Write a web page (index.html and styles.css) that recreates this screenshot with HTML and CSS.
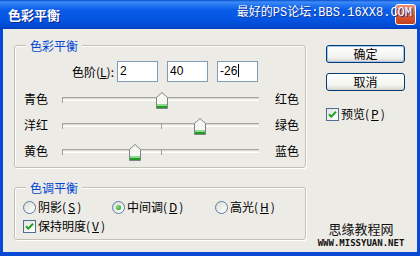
FILE: index.html
```html
<!DOCTYPE html>
<html>
<head>
  <meta charset="utf-8">
  <link rel="stylesheet" href="styles.css">
</head>
<body>
  <div class="window">
    <div class="titlebar">
      <span class="title">色彩平衡</span>
      <span class="forum">最好的PS论坛:BBS.16XX8.COM</span>
      <span class="close"></span>
    </div>

    <div class="body">
      <div class="main">
        <div class="group balance">
          <span class="legend">色彩平衡</span>
          <div class="levels">
            <span class="levels-label">色阶(<u>L</u>):</span>
            <div class="field">2</div>
            <div class="field">40</div>
            <div class="field">-26<span class="caret"></span></div>
          </div>

          <div class="sliders">
            <div class="slider-row">
              <span class="slider-name">青色</span>
              <div class="track">
                <i class="tick start"></i><i class="tick mid"></i>
                <svg class="thumb" style="left:51%" viewBox="0 0 12 17" width="12" height="17">
                  <path d="M0.5 5.5 L6 0.5 L11.5 5.5 V16.5 H0.5 Z" fill="#F6F7F2" stroke="#7E8384"/>
                  <rect x="1" y="12" width="10" height="2" fill="#8FD98F"/>
                  <rect x="1" y="14" width="10" height="2" fill="#249B24"/>
                </svg>
              </div>
              <span>红色</span>
            </div>
            <div class="slider-row">
              <span class="slider-name">洋红</span>
              <div class="track">
                <i class="tick start"></i><i class="tick mid"></i>
                <svg class="thumb" style="left:70%" viewBox="0 0 12 17" width="12" height="17">
                  <path d="M0.5 5.5 L6 0.5 L11.5 5.5 V16.5 H0.5 Z" fill="#F6F7F2" stroke="#7E8384"/>
                  <rect x="1" y="12" width="10" height="2" fill="#8FD98F"/>
                  <rect x="1" y="14" width="10" height="2" fill="#249B24"/>
                </svg>
              </div>
              <span>绿色</span>
            </div>
            <div class="slider-row">
              <span class="slider-name">黄色</span>
              <div class="track">
                <i class="tick start"></i><i class="tick mid"></i>
                <svg class="thumb" style="left:37%" viewBox="0 0 12 17" width="12" height="17">
                  <path d="M0.5 5.5 L6 0.5 L11.5 5.5 V16.5 H0.5 Z" fill="#F6F7F2" stroke="#7E8384"/>
                  <rect x="1" y="12" width="10" height="2" fill="#8FD98F"/>
                  <rect x="1" y="14" width="10" height="2" fill="#249B24"/>
                </svg>
              </div>
              <span>蓝色</span>
            </div>
          </div>
        </div>

        <div class="group tone">
          <span class="legend">色调平衡</span>
          <div class="radios">
            <label class="radio"><span class="dot"></span>阴影(<u>S</u>)</label>
            <label class="radio"><span class="dot on"></span>中间调(<u>D</u>)</label>
            <label class="radio"><span class="dot"></span>高光(<u>H</u>)</label>
          </div>
          <label class="check keep">
            <span class="box"><svg viewBox="0 0 11 11" width="11" height="11"><path d="M2 5.2 L4.3 7.6 L9 2.8" fill="none" stroke="#21A121" stroke-width="2"/></svg></span>保持明度(<u>V</u>)
          </label>
        </div>
      </div>

      <div class="side">
        <button class="btn default">确定</button>
        <button class="btn">取消</button>
        <label class="check preview">
          <span class="box"><svg viewBox="0 0 11 11" width="11" height="11"><path d="M2 5.2 L4.3 7.6 L9 2.8" fill="none" stroke="#21A121" stroke-width="2"/></svg></span>预览(<u>P</u>)
        </label>
        <div class="stamp">
          <div class="stamp-cn">思缘教程网</div>
          <div class="stamp-url">WWW.MISSYUAN.NET</div>
        </div>
      </div>
    </div>
  </div>
</body>
</html>
```

FILE: styles.css
```css
body {
  margin: 0;
  font-family: "Noto Sans CJK SC", sans-serif;
  font-size: 12px;
  color: #000;
}
.window {
  width: 420px;
  height: 256px;
  display: flex;
  flex-direction: column;
  background: #0A48D6;
}
.titlebar {
  position: relative;
  height: 29px;
  flex: none;
  display: flex;
  align-items: center;
  padding-left: 8px;
  color: #fff;
  background: linear-gradient(#0A50D0 0, #3C8CF6 2px, #2575F2 5px, #0A5DE9 10px, #0556E3 19px, #024AD3 26px, #0040C0 29px);
}
.title {
  font-weight: bold;
  font-size: 13px;
  line-height: 16px;
  margin-top: 1px;
  text-shadow: 1px 1px 0 #0B2A8A;
}
.forum {
  position: relative;
  z-index: 1;
  margin-left: auto;
  margin-right: 8px;
  margin-top: -3px;
  font-family: "Liberation Mono", "Noto Sans CJK SC", monospace;
  font-size: 12px;
  line-height: 14px;
  text-shadow: 1px 1px 0 #1A3A9A;
}
.close {
  position: absolute;
  right: 4px;
  top: 4px;
  width: 19px;
  height: 19px;
  border: 1px solid #fff;
  border-radius: 3px;
  background: linear-gradient(#E9937A, #DA5A32 55%, #C23F1C);
}
.body {
  flex: 1;
  display: flex;
  margin: 0 3px 4px 3px;
  background: #ECEBE6;
}
.main {
  flex: none;
  width: 292px;
  padding: 16px 0 0 11px;
}
.group {
  position: relative;
  box-sizing: border-box;
  width: 292px;
  border: 1px solid #C2C1B7;
  border-radius: 3px;
  box-shadow: inset 1px 1px 0 #fff, 1px 1px 0 #fff;
}
.balance {
  height: 123px;
}
.tone {
  height: 53px;
  margin-top: 19px;
}
.legend {
  position: absolute;
  top: -7px;
  left: 11px;
  padding: 0 4px;
  line-height: 14px;
  color: #0046D5;
  background: #ECEBE6;
}
.levels {
  display: flex;
  align-items: center;
  margin: 15px 0 0 48px;
}
.levels-label {
  width: 51px;
  margin-right: 3px;
  text-align: right;
  line-height: 14px;
}
.field {
  box-sizing: border-box;
  width: 41px;
  height: 21px;
  margin-right: 9px;
  padding-left: 2px;
  border: 1px solid #7F9DB9;
  background: #fff;
  font-family: "Liberation Sans", sans-serif;
  font-size: 12px;
  line-height: 19px;
}
.caret {
  display: inline-block;
  width: 1px;
  height: 13px;
  margin-left: 1px;
  vertical-align: -2px;
  background: #000;
}
.sliders {
  margin-top: 4px;
}
.slider-row {
  display: flex;
  align-items: center;
  height: 26px;
  padding-left: 9px;
  line-height: 14px;
}
.slider-name {
  width: 38px;
}
.track {
  position: relative;
  width: 197px;
  height: 4px;
  margin-right: 16px;
  background: linear-gradient(#A8A79E 0 1px, #DCDBD3 1px 2px, #F4F3EE 2px 3px, #fff 3px);
}
.tick {
  position: absolute;
  top: 0;
  width: 1px;
  height: 6px;
  background: #A3A298;
}
.tick.start {
  left: 0;
}
.tick.mid {
  left: 99px;
}
.thumb {
  position: absolute;
  top: -5px;
  margin-left: -6px;
}
.radios {
  display: grid;
  grid-template-columns: 89px 103px auto;
  height: 16px;
  margin-top: 11px;
  padding-left: 8px;
}
.radio, .check {
  display: flex;
  align-items: center;
  gap: 2px;
  line-height: 14px;
}
.dot {
  position: relative;
  box-sizing: border-box;
  width: 13px;
  height: 13px;
  border: 1px solid #5B7D9E;
  border-radius: 50%;
  background: linear-gradient(135deg, #DCDCD4, #fff);
}
.dot.on::after {
  content: "";
  position: absolute;
  left: 3px;
  top: 3px;
  width: 5px;
  height: 5px;
  border-radius: 50%;
  background: radial-gradient(circle at 35% 35%, #7BE07B, #1E9A1E);
}
.box {
  box-sizing: border-box;
  width: 13px;
  height: 13px;
  padding: 0;
  border: 1px solid #4E6F90;
  background: linear-gradient(135deg, #E4E3DC, #fff);
}
.box svg {
  display: block;
}
.keep {
  height: 16px;
  margin-top: 3px;
  padding-left: 8px;
}
.side {
  flex: 1;
  display: flex;
  flex-direction: column;
  align-items: flex-start;
  padding: 16px 0 0 20px;
}
.btn {
  box-sizing: border-box;
  width: 79px;
  height: 18px;
  padding: 0;
  border: 1px solid #003C74;
  border-radius: 3px;
  background: linear-gradient(#FFFFFF, #F3F3EF 70%, #D8D5CB);
  font-family: "Noto Sans CJK SC", sans-serif;
  font-size: 12px;
  line-height: 14px;
  color: #000;
}
.btn.default {
  box-shadow: inset 0 0 0 1px #A9C2EE;
}
.btn + .btn {
  margin-top: 10px;
}
.preview {
  margin-top: 16px;
}
.stamp {
  margin-top: auto;
  margin-left: -9px;
  padding-bottom: 5px;
  width: 88px;
  text-align: center;
}
.stamp-cn {
  font-size: 13px;
  line-height: 14px;
  color: #111;
}
.stamp-url {
  margin-top: 3px;
  font-family: "DejaVu Sans Mono", monospace;
  font-weight: bold;
  font-size: 9px;
  line-height: 8px;
  color: #111;
}
```
